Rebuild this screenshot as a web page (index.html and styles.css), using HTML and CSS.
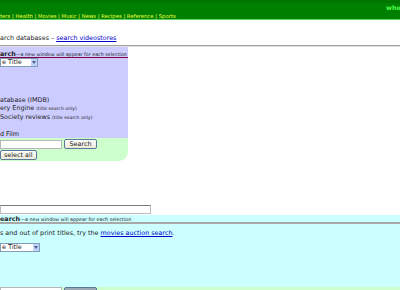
FILE: index.html
```html
<!DOCTYPE html>
<html lang="en">
<head>
    <meta charset="UTF-8">
    <title>Movie Search</title>
    <link rel="stylesheet" href="styles.css">
</head>
<body>
    <div class="topbar">
        <div class="nav">ters | Health | Movies | Music | News | Recipes | Reference | Sports</div>
        <div class="where">whe</div>
    </div>

    <div class="crumbs">arch databases &ndash; <a href="#">search videostores</a></div>
    <div class="rule"></div>

    <!-- multi search panel -->
    <div class="panel">
        <div class="lav">
            <div class="panel-head"><b>arch</b><span class="note">&mdash;a new window will appear for each selection</span></div>
            <div class="sel">e Title</div>
            <div class="sources">
                <div class="src"></div>
                <div class="src"></div>
                <div class="src"></div>
                <div class="src">atabase (IMDB)</div>
                <div class="src">ery Engine <span class="small">(title search only)</span></div>
                <div class="src">Society reviews <span class="small">(title search only)</span></div>
                <div class="src"></div>
                <div class="src">d Film</div>
            </div>
        </div>
        <div class="mint">
            <div class="go-row">
                <input type="text" class="box">
                <button type="button" class="btn">Search</button>
            </div>
            <button type="button" class="btn">select all</button>
        </div>
    </div>

    <div class="wide-row">
        <input type="text" class="wide">
    </div>

    <div class="cyan">
        <div class="cyan-head"><b>earch</b><span class="note">&mdash;a new window will appear for each selection</span></div>
        <p class="tip">s and out of print titles, try the <a href="#">movies auction search</a>.</p>
        <div class="sel sel-wide">e Title</div>
    </div>
    <div class="mint-strip">
        <input type="text" class="box">
        <span class="btn-top"></span>
    </div>
</body>
</html>
```

FILE: styles.css
```css
body {
    margin: 0;
    font-family: Verdana, "DejaVu Sans", sans-serif;
    font-size: 6.4px;
    color: #222;
    background-color: #fff;
    overflow: hidden;
}

a {
    color: #0000cc;
}

.topbar {
    position: relative;
    height: 20px;
    box-sizing: border-box;
    background-color: #008000;
    border-top: 3px solid #007500;
    border-bottom: 1px solid #5fd35f;
}

.nav {
    padding-top: 10px;
    color: #f0ff40;
    font-size: 5.3px;
    white-space: nowrap;
}

.where {
    position: absolute;
    top: 1px;
    left: 386px;
    color: #4cff4c;
    font-weight: bold;
    font-size: 6.4px;
}

.crumbs {
    padding-top: 14px;
    height: 11px;
    white-space: nowrap;
}

.rule {
    height: 1px;
    border-top: 1px solid #a0a0a0;
    background-color: #e0e0e0;
}

.panel {
    width: 128px;
}

.lav {
    background-color: #ccccff;
}

.panel-head {
    white-space: nowrap;
    padding-top: 3px;
    height: 11px;
    box-sizing: border-box;
    border-bottom: 1px solid #800040;
}

.note {
    font-size: 4.8px;
}

.small {
    font-size: 4.6px;
}

.sel {
    position: relative;
    width: 38px;
    height: 9px;
    box-sizing: border-box;
    background-color: #fff;
    border: 1px solid #7f9db9;
    line-height: 7px;
    padding-left: 1px;
}

.sel::after {
    content: "";
    position: absolute;
    top: 0;
    right: 0;
    width: 6px;
    height: 7px;
    background-color: #c1d3fb;
}

.sel::before {
    content: "";
    position: absolute;
    top: 2px;
    right: 1px;
    width: 0;
    height: 0;
    border-left: 2px solid transparent;
    border-right: 2px solid transparent;
    border-top: 3px solid #4d6185;
    z-index: 1;
}

.sources {
    margin-top: 3px;
}

.src {
    height: 8.5px;
    line-height: 8.5px;
    white-space: nowrap;
}

.mint {
    background-color: #ccffcc;
    border-bottom-right-radius: 9px;
    padding: 1px 0 1px;
}

.go-row {
    display: flex;
    align-items: center;
    gap: 2px;
    margin-bottom: 1px;
}

.box {
    width: 62px;
    height: 9px;
    box-sizing: border-box;
    margin: 0;
    padding: 0;
    border: 1px solid #b8b8b8;
    background-color: #fff;
}

.btn {
    display: block;
    margin: 0;
    padding: 0 3px;
    height: 10px;
    font-family: Verdana, "DejaVu Sans", sans-serif;
    font-size: 6.4px;
    line-height: 8px;
    color: #222;
    background: linear-gradient(#fdfdfb, #ece9d8);
    border: 1px solid #5a7a9a;
    border-radius: 2px;
}

.go-row .btn {
    width: 33px;
}

.wide-row {
    margin-top: 44px;
    height: 10px;
}

.wide {
    display: block;
    width: 151px;
    height: 9px;
    box-sizing: border-box;
    margin: 0;
    border: 1px solid #bcbcbc;
    border-top-color: #7a7a7a;
    background-color: #fff;
}

.cyan {
    background-color: #ccffff;
    height: 72px;
    box-sizing: border-box;
}

.cyan-head {
    white-space: nowrap;
    height: 6px;
    padding-top: 1px;
    line-height: 6px;
    border-bottom: 2px solid #a8a8a8;
}

.tip {
    margin: 5px 0 0;
    white-space: nowrap;
    line-height: 9px;
}

.sel-wide {
    width: 40px;
    margin-top: 5px;
}

.mint-strip {
    display: flex;
    gap: 2px;
    height: 10px;
    background-color: #ccffcc;
}

.btn-top {
    width: 33px;
    height: 10px;
    box-sizing: border-box;
    border: 1px solid #5a7a9a;
    border-radius: 2px;
    background-color: #9aa9b3;
}
```
